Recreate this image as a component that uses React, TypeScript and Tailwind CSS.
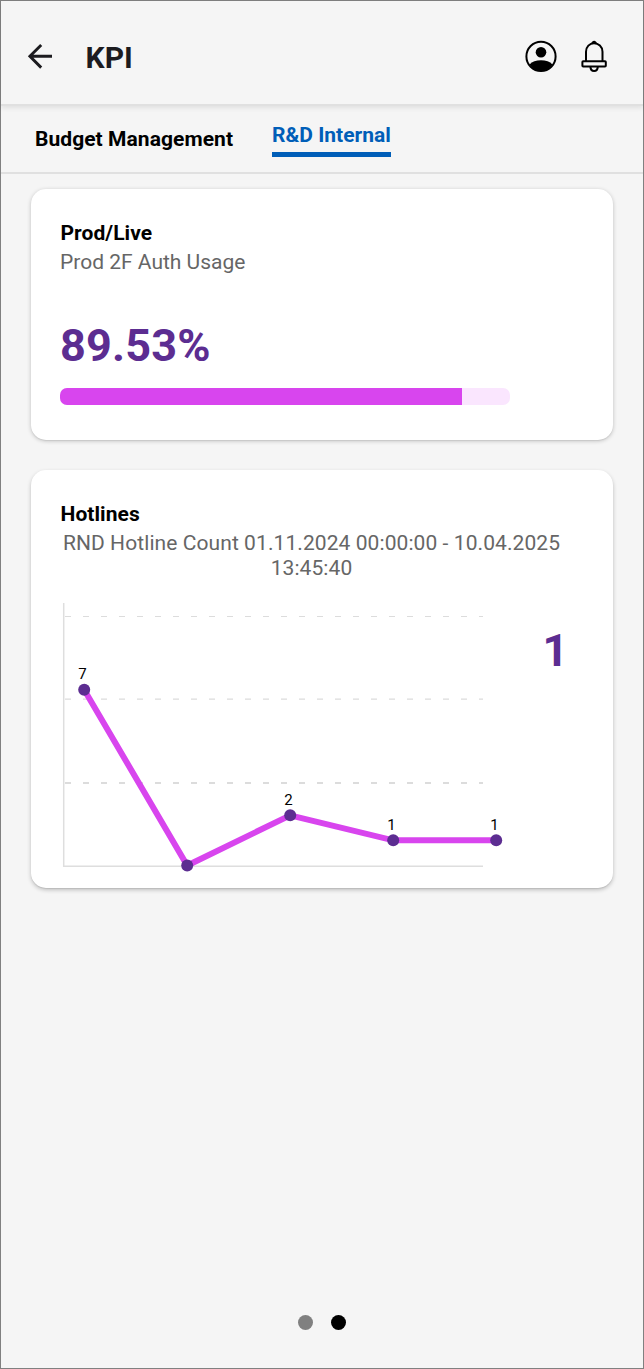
import type { ReactNode } from "react";

const points = [
  { x: 53.2, y: 86.7, label: "7" },
  { x: 156.2, y: 262.5, label: "" },
  { x: 259.2, y: 212.3, label: "2" },
  { x: 362.2, y: 237.3, label: "1" },
  { x: 465.2, y: 237.3, label: "1" },
];

const gridLines = [
  { y: 13.5, w: 1 },
  { y: 96.1, w: 1.3 },
  { y: 180, w: 2 },
];

function BackIcon() {
  return (
    <svg width="26" height="26" viewBox="0 0 26 26" fill="none" stroke="#1c1b1f" strokeWidth="2.9">
      <path d="M25 13.3H3M14.2 2 2.9 13.3l11.3 11.3" />
    </svg>
  );
}

function UserIcon() {
  return (
    <svg width="32" height="32" viewBox="0 0 32 32">
      <circle cx="16" cy="16.4" r="14.6" fill="none" stroke="#000" strokeWidth="2" />
      <circle cx="16" cy="12.3" r="5.3" />
      <path d="M4.6 24.6C7 21.4 11.2 20.2 16 20.2s9 1.2 11.4 4.4A14.6 14.6 0 0 1 16 31.2 14.6 14.6 0 0 1 4.6 24.6Z" />
    </svg>
  );
}

function BellIcon() {
  return (
    <svg width="26" height="32" viewBox="0 0 26 32" fill="none" stroke="#000" strokeWidth="2">
      <path d="M5 21V11.8C5 6.7 8.6 3.2 13 3.2s8.5 3.5 8.5 8.6V21" />
      <path d="M9.8 4.1C10.5 2.1 11.6.7 13.1.7s2.6 1.4 3.3 3.4Z" fill="#000" stroke="none" />
      <rect x="1.4" y="21.3" width="23.4" height="5.2" rx=".8" />
      <path d="M9.4 26.6c.1 2.9 1.4 4.3 3.7 4.3s3.6-1.4 3.7-4.3" />
    </svg>
  );
}

function Card({ children, className }: { children: ReactNode; className: string }) {
  return (
    <section className={`flex flex-col rounded-[15px] bg-white ${className}`}>
      {children}
    </section>
  );
}

function HotlineChart() {
  return (
    <svg width="480" height="280" viewBox="0 0 480 280" className="block shrink-0">
      {gridLines.map((g) => (
        <path key={g.y} d={`M34 ${g.y}H452`} stroke="#dcdcdc" strokeWidth={g.w} strokeDasharray="6 12" />
      ))}
      <path d="M32.7 0V263.3H452" fill="none" stroke="#dedede" strokeWidth="1.5" />
      <polyline
        points={points.map((p) => `${p.x},${p.y}`).join(" ")}
        fill="none"
        stroke="#d845ee"
        strokeWidth="6"
      />
      {points.map((p) => (
        <g key={p.x}>
          <circle cx={p.x} cy={p.y} r="6" fill="#5c2d91" />
          <text x={p.x - 1.8} y={p.y - 10.4} fontSize="15" textAnchor="middle" fill="#000">
            {p.label}
          </text>
        </g>
      ))}
    </svg>
  );
}

export default function App() {
  return (
    <div className="flex h-[1369px] w-[644px] flex-col border border-[#808080] bg-[#f5f5f5] font-[Roboto,sans-serif]">
      <header className="flex h-[105px] shrink-0 items-center border-b-2 border-[#e0e0e0] pt-[7px] pr-9 pl-[26px] shadow-[0_2px_5px_rgba(0,0,0,0.09)]">
        <BackIcon />
        <h1 className="mt-[3px] ml-8 pl-[0.5px] text-[30px] leading-9 font-bold tracking-[0.1px] text-[#1c1b1f]">KPI</h1>
        <div className="ml-auto flex items-center gap-6">
          <UserIcon />
          <BellIcon />
        </div>
      </header>
      <nav className="flex h-[68px] shrink-0 items-start border-b-2 border-[#e0e0e0] pl-[34px] text-[21px] leading-6 font-bold">
        <span className="mt-[21px] w-[199px] tracking-[0.06px] whitespace-nowrap text-black">Budget Management</span>
        <span className="mt-[17px] ml-[38px] w-[119px] border-b-[5px] border-[#005eb8] pb-[5px] whitespace-nowrap text-[#005eb8]">
          R&amp;D Internal
        </span>
      </nav>
      <main className="flex flex-1 flex-col gap-[30px] px-[30px] pt-[15px]">
        <Card className="h-[251px] pt-8 pl-[29px] shadow-[0_1px_4px_rgba(0,0,0,0.22),0_1px_1px_rgba(0,0,0,0.06)]">
          <h2 className="pl-[0.5px] text-[21px] leading-6 font-bold tracking-[0.06px] text-black">Prod/Live</h2>
          <p className="mt-[5px] text-[21px] leading-6 text-[#666]">Prod 2F Auth Usage</p>
          <p className="mt-[45px] text-[45px] leading-[54px] font-bold tracking-[0.2px] text-[#5c2d91]">89.53%</p>
          <div className="mt-[15px] h-[17px] w-[450px] overflow-hidden rounded-[7px] bg-[#fae6fe]">
            <div className="h-full bg-[#d845ee]" style={{ width: "89.4%" }} />
          </div>
        </Card>
        <Card className="h-[418px] pt-8 shadow-[0_2px_4px_rgba(0,0,0,0.22),0_1px_1px_rgba(0,0,0,0.08)]">
          <h2 className="pl-[29.5px] text-[21px] leading-6 font-bold tracking-[0.06px] text-black">Hotlines</h2>
          <p className="mt-[5px] ml-[29px] w-[503px] text-center text-[21px] leading-[25px] tracking-[0.08px] text-[#666]">
            RND Hotline Count 01.11.2024 00:00:00 - 10.04.2025
            <br />
            13:45:40
          </p>
          <div className="mt-[22px] flex">
            <HotlineChart />
            <p className="mt-[21px] ml-[31.5px] text-[45px] leading-[54px] font-bold text-[#5c2d91]">1</p>
          </div>
        </Card>
      </main>
      <footer className="flex shrink-0 justify-center gap-[18px] pb-[38px]">
        <span className="size-[15px] rounded-full bg-[#808080]" />
        <span className="size-[15px] rounded-full bg-black" />
      </footer>
    </div>
  );
}
